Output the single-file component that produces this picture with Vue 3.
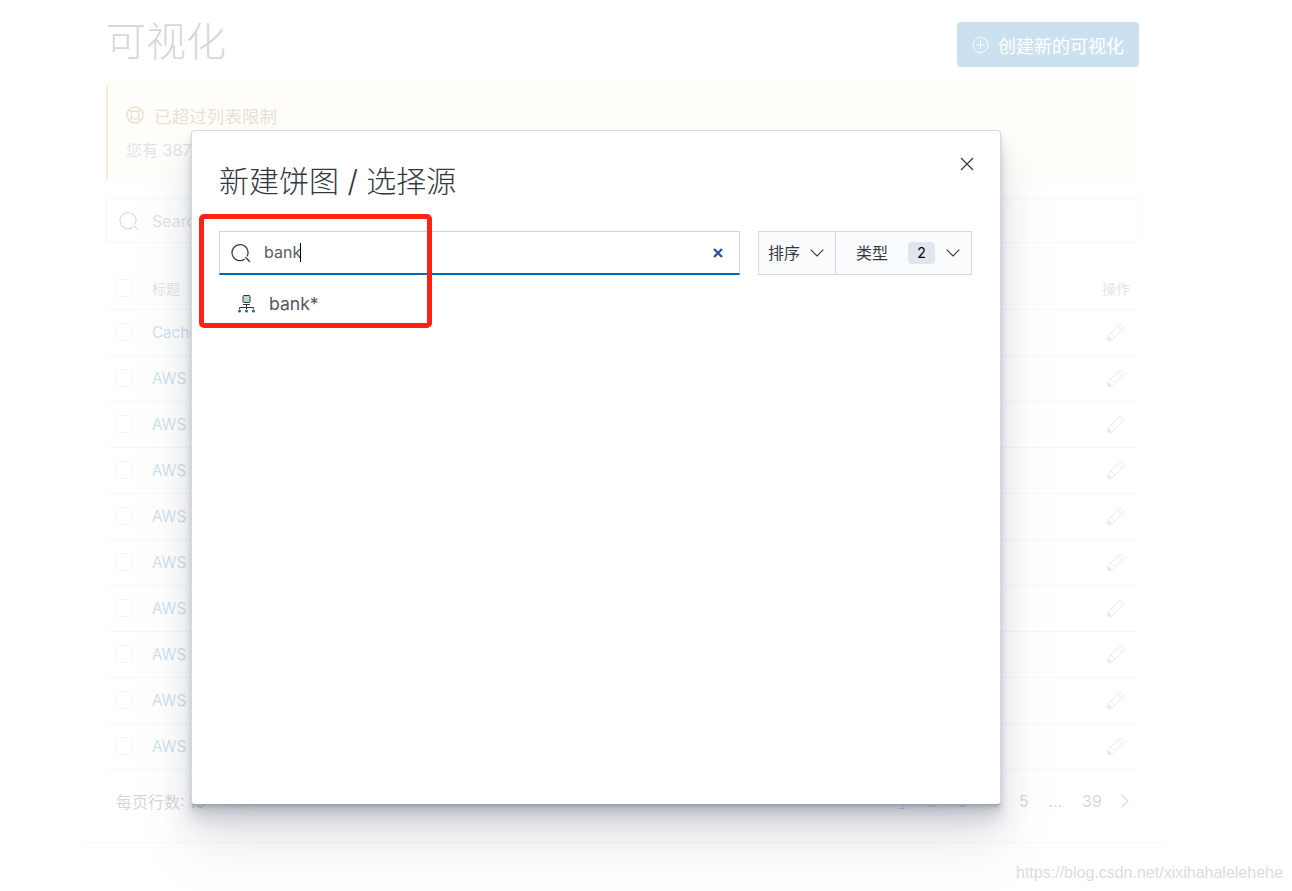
<script setup>
const rows = ['Cache', 'AWS', 'AWS', 'AWS', 'AWS', 'AWS', 'AWS', 'AWS', 'AWS', 'AWS']
const pages = ['1', '2', '3', '4', '5']
</script>

<template>
  <div class="page">
    <div class="panel">
      <div class="head">
        <h1>可视化</h1>
        <button class="create">
          <svg width="18" height="18" viewBox="0 0 18 18" fill="none" stroke="#fff" stroke-width="1">
            <circle cx="9" cy="9" r="8" />
            <path d="M9 4.500v9M4.500 9h9" />
          </svg>
          <span>创建新的可视化</span>
        </button>
      </div>

      <div class="callout">
        <div class="callout-title">
          <svg width="18" height="18" viewBox="0 0 18 18" fill="none" stroke="#8a6a0a" stroke-width="1.400">
            <circle cx="9" cy="9" r="8" />
            <circle cx="9" cy="9" r="4" />
            <path d="M3.500 3.500l2.700 2.700M14.500 3.500l-2.700 2.700M3.500 14.500l2.700-2.700M14.500 14.500l-2.700-2.700" />
          </svg>
          <span>已超过列表限制</span>
        </div>
        <div class="callout-text">您有 387 个可视化</div>
      </div>

      <div class="search">
        <svg width="20" height="20" viewBox="0 0 20 20" fill="none" stroke="#343741" stroke-width="1.100" stroke-linecap="round">
          <path d="M13.500 16.300A8 8 0 1 1 16.300 13" />
          <path d="M14.800 14.500l3.700 4" />
        </svg>
        <span>Search...</span>
      </div>

      <div class="table-head">
        <span class="check"></span>
        <span class="th-title">标题</span>
        <span class="th-action">操作</span>
      </div>
      <div v-for="(row, i) in rows" :key="i" class="row">
        <span class="check"></span>
        <span class="row-title">{{ row }}</span>
        <svg class="pencil" width="18" height="18" viewBox="0 0 18 18" fill="none" stroke="#8a8f99" stroke-width="1">
          <path d="M1 12.800L12.300 1.500a1.500 1.500 0 0 1 2.100 0l2.100 2.100a1.500 1.500 0 0 1 0 2.100L5.200 17H1z" />
          <path d="M3.800 10l4.200 4.200M11 2.800l4.200 4.200" />
          <path d="M1 13.500V17h3.500z" fill="#8a8f99" />
        </svg>
      </div>

      <div class="foot">
        <span class="per-page">每页行数: 10</span>
        <div class="pager">
          <span v-for="p in pages" :key="p" class="pg" :class="{ on: p === '1' }">{{ p }}</span>
          <span class="pg dots">...</span>
          <span class="pg last">39</span>
          <svg width="12" height="16" viewBox="0 0 12 16" fill="none" stroke="#343741" stroke-width="1.100">
            <path d="M2.500 1.500L9 8l-6.500 6.500" />
          </svg>
        </div>
      </div>
    </div>

    <div class="overlay"></div>

    <div class="modal">
      <button class="close">
        <svg width="14" height="14" viewBox="0 0 14 14" fill="none" stroke="#343741" stroke-width="1.200">
          <path d="M1 1l12 12M13 1L1 13" />
        </svg>
      </button>
      <h2>新建饼图 / 选择源</h2>
      <div class="tools">
        <div class="input">
          <svg width="20" height="20" viewBox="0 0 20 20" fill="none" stroke="#343741" stroke-width="1.200" stroke-linecap="round">
            <path d="M13.500 16.300A8 8 0 1 1 16.300 13" />
            <path d="M14.800 14.500l3.700 4" />
          </svg>
          <span class="value">bank</span>
          <span class="caret"></span>
          <svg class="clear" width="10" height="10" viewBox="0 0 10 10" fill="none" stroke="#2c5c8f" stroke-width="2.400">
            <path d="M1 1l8 8M9 1L1 9" />
          </svg>
        </div>
        <div class="filters">
          <div class="filter sort">
            <span>排序</span>
            <svg width="14" height="8" viewBox="0 0 14 8" fill="none" stroke="#343741" stroke-width="1.100">
              <path d="M.7.7L7 7 13.300.7" />
            </svg>
          </div>
          <div class="filter type">
            <span>类型</span>
            <b class="count">2</b>
            <svg width="14" height="8" viewBox="0 0 14 8" fill="none" stroke="#343741" stroke-width="1.100">
              <path d="M.7.7L7 7 13.300.7" />
            </svg>
          </div>
        </div>
      </div>
      <div class="result">
        <svg width="18" height="18" viewBox="0 0 18 18" fill="none">
          <rect x="6" y=".5" width="7" height="7" rx="1" fill="#b9d8d4" stroke="#343741" />
          <path d="M6 9.500h7M9.500 9.500v3M2.500 14v-1.500h14V14M9.500 12.500V14" stroke="#343741" />
          <circle cx="2.500" cy="16" r="1.500" fill="#017d73" />
          <circle cx="9.500" cy="16" r="1.500" fill="#017d73" />
          <circle cx="16.500" cy="16" r="1.500" fill="#017d73" />
        </svg>
        <span>bank*</span>
      </div>
    </div>

    <div class="mark"></div>
    <div class="watermark">https://blog.csdn.net/xixihahalelehehe</div>
  </div>
</template>

<style scoped>
.page {
  position: relative;
  height: 891px;
  overflow: hidden;
  background: #fff;
  font-family: Inter, "Noto Sans CJK SC", sans-serif;
  color: #343741;
}

.panel {
  margin-left: 78px;
  width: 1087px;
  height: 842px;
  box-sizing: border-box;
  padding: 22px 26px 0 28px;
  border-radius: 0 0 4px 4px;
  box-shadow: 0 2px 2px -1px rgba(152, 162, 179, 0.3), 0 1px 5px -2px rgba(152, 162, 179, 0.3);
}

.head {
  display: flex;
  justify-content: space-between;
  height: 63px;
}

h1 {
  margin: -4px 0 0;
  font-size: 40px;
  font-weight: 300;
  line-height: 48px;
}

.create {
  display: flex;
  align-items: center;
  gap: 9px;
  width: 182px;
  height: 45px;
  padding: 0 15px;
  border: none;
  border-radius: 4px;
  background: #006bb4;
  color: #fff;
  font: 18px Inter, "Noto Sans CJK SC", sans-serif;
  white-space: nowrap;
}

.callout {
  height: 95px;
  margin-right: 1px;
  box-sizing: border-box;
  padding: 18px 18px;
  border-left: 2px solid #f5a700;
  background: #fff9e8;
  color: #343741;
}

.callout-title {
  display: flex;
  align-items: center;
  gap: 10px;
  height: 24px;
  font-size: 17.600px;
  color: #8a6a0a;
}

.callout-text {
  margin-top: 10px;
  font-size: 16px;
  color: #6e7078;
}

.search {
  display: flex;
  align-items: center;
  gap: 13px;
  height: 45px;
  margin-top: 18px;
  margin-right: 1px;
  box-sizing: border-box;
  padding-left: 12px;
  border: 1px solid #d3dae6;
  font-size: 16px;
  color: #69707d;
}

.table-head {
  display: flex;
  align-items: center;
  height: 42px;
  margin-top: 24px;
  margin-right: 1px;
  padding-left: 9px;
  border-bottom: 1px solid #d3dae6;
  font-size: 14px;
  color: #69707d;
}

.check {
  width: 18px;
  height: 18px;
  box-sizing: border-box;
  border: 1px solid #c2c9d6;
  border-radius: 4px;
}

.th-title {
  margin-left: 19px;
}

.th-action {
  margin-left: auto;
  margin-right: 8px;
}

.row {
  display: flex;
  align-items: center;
  height: 43px;
  margin-right: 1px;
  padding: 0 0 2px 9px;
  border-bottom: 1px solid #d3dae6;
  font-size: 15.200px;
}

.row-title {
  margin-left: 19px;
  margin-top: 2px;
  color: #006bb4;
}

.pencil {
  margin-left: auto;
  margin-right: 13px;
}

.foot {
  display: flex;
  justify-content: space-between;
  align-items: center;
  height: 62px;
  padding: 0 8px 0 10px;
  font-size: 16px;
}

.per-page {
  color: #343741;
}

.pager {
  display: flex;
  align-items: center;
}

.pg {
  width: 30.500px;
  text-align: center;
}

.pg.on {
  color: #006bb4;
  text-decoration: underline;
}

.pg.dots {
  width: 33px;
}

.pg.last {
  width: 40px;
  margin-right: 7px;
}

.overlay {
  position: absolute;
  inset: 0;
  background: rgba(255, 255, 255, 0.8);
}

.modal {
  position: absolute;
  left: 191px;
  top: 130px;
  width: 810px;
  height: 675px;
  box-sizing: border-box;
  padding: 26px 28px 26px 27px;
  background: #fff;
  border: 1px solid #d3dae6;
  border-bottom-color: #98a2b3;
  border-radius: 4px;
  box-shadow: 0 40px 64px 0 rgba(65, 78, 101, 0.1), 0 24px 32px 0 rgba(65, 78, 101, 0.1),
    0 16px 16px 0 rgba(65, 78, 101, 0.1), 0 8px 8px 0 rgba(65, 78, 101, 0.1),
    0 4px 4px 0 rgba(65, 78, 101, 0.1), 0 2px 2px 0 rgba(65, 78, 101, 0.1);
}

.close {
  position: absolute;
  right: 26px;
  top: 26px;
  padding: 0;
  border: none;
  background: none;
  line-height: 0;
}

h2 {
  margin: 0;
  font-size: 30px;
  font-weight: 300;
  line-height: 48px;
}

.tools {
  display: flex;
  justify-content: space-between;
  margin-top: 26px;
}

.input {
  display: flex;
  align-items: center;
  width: 521px;
  height: 44px;
  box-sizing: border-box;
  padding: 0 16px 0 11px;
  border: 1px solid #d0d3d8;
  border-bottom: 2px solid #006bb4;
  font-size: 16px;
  color: #5a5e68;
}

.value {
  margin-left: 13px;
  margin-top: -2px;
}

.caret {
  width: 1px;
  height: 19px;
  margin-left: -1px;
  background: #000;
}

.clear {
  margin-left: auto;
}

.filters {
  display: flex;
  width: 214px;
  height: 44px;
  box-sizing: border-box;
  border: 1px solid #d3dae6;
  background: #fafbfd;
  font-size: 16px;
}

.filter {
  display: flex;
  align-items: center;
}

.sort {
  width: 77px;
  box-sizing: border-box;
  padding-left: 9px;
  gap: 10px;
  border-right: 1px solid #d3dae6;
}

.filter span {
  margin-top: -2px;
}

.type {
  flex: 1;
  padding-left: 20px;
}

.count {
  width: 27px;
  height: 22px;
  margin: 0 11px 0 20px;
  border-radius: 4px;
  background: #e0e5ee;
  font-size: 14px;
  font-weight: 400;
  line-height: 22px;
  text-align: center;
  color: #000;
}

.result {
  display: flex;
  align-items: center;
  gap: 14px;
  margin-top: 20px;
  padding-left: 18px;
  font-size: 17.600px;
  line-height: 18px;
  color: #54575f;
}

.mark {
  position: absolute;
  left: 199px;
  top: 214px;
  width: 233px;
  height: 114px;
  box-sizing: border-box;
  border: 5px solid #ff2116;
  border-radius: 5px;
}

.watermark {
  position: absolute;
  left: 1016px;
  top: 864px;
  font: 16px "Liberation Sans", Arial, sans-serif;
  color: #dcdcdc;
  white-space: nowrap;
}
</style>
